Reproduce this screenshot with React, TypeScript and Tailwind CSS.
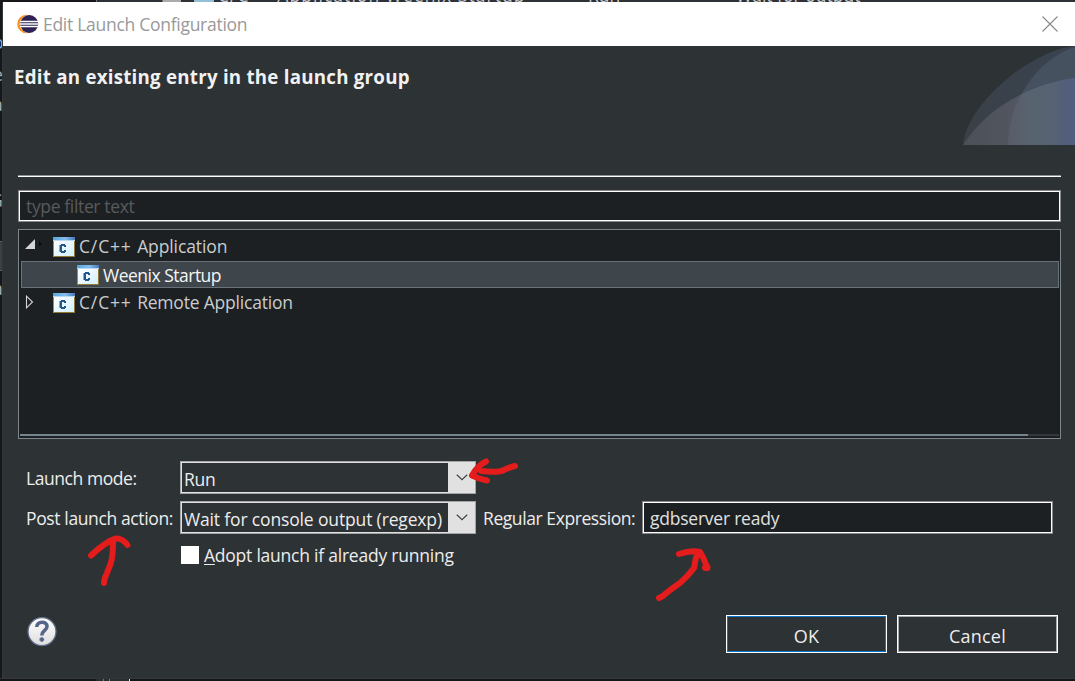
import React from "react";

function EclipseLogo() {
  return (
    <svg width="22" height="20" viewBox="0 0 22 20" className="shrink-0">
      <circle cx="9.4" cy="10" r="9.2" fill="#f7941e" />
      <circle cx="12.2" cy="10" r="9.2" fill="#fbe3c4" />
      <circle cx="12.2" cy="10" r="9" fill="#2c2255" />
      <path d="M3 7.5h18.6M2.7 10h19M3 12.5h18.6" stroke="#fff" strokeWidth="1.3" />
    </svg>
  );
}

function AppIcon() {
  return (
    <svg width="22" height="20" viewBox="0 0 22 20" className="shrink-0" shapeRendering="crispEdges">
      <defs>
        <linearGradient id="bar" x1="0" x2="1">
          <stop offset="0" stopColor="#58a6dc" />
          <stop offset=".55" stopColor="#82bdec" />
          <stop offset="1" stopColor="#4a78b8" />
        </linearGradient>
        <linearGradient id="pane" x1="0" y1="0" x2="1" y2="1">
          <stop offset="0" stopColor="#ffffff" />
          <stop offset="1" stopColor="#d3f0fc" />
        </linearGradient>
      </defs>
      <rect width="22" height="20" fill="#8f7a35" />
      <rect width="1" height="20" fill="#a58c42" />
      <rect x="1" y="4" width="20" height="15" fill="url(#pane)" />
      <rect width="22" height="3" fill="url(#bar)" />
      <rect y="3" width="22" height="1" fill="#b9daf4" />
      <path d="M6 8h2v-1h4v1h1v2h-2v-1h-2v5h2v-1h2v2h-1v1H8v-1H6z" fill="#1f568c" />
      <path d="M6 8h1v7H6z" fill="#7fb0d4" />
    </svg>
  );
}

function Chevron() {
  return (
    <svg width="12" height="7" viewBox="0 0 12 7">
      <path d="M.8.8 6 5.700 11.200.8" fill="none" stroke="#444" strokeWidth="1.200" />
    </svg>
  );
}

function Swoosh() {
  return (
    <svg width="112" height="99" viewBox="963 46 112 99" className="shrink-0">
      <defs>
        <linearGradient id="outer" x1="0" x2="1">
          <stop offset="0" stopColor="#3a4047" />
          <stop offset="1" stopColor="#394351" />
        </linearGradient>
        <linearGradient id="lower" x1="0" x2="1">
          <stop offset="0" stopColor="#4b5157" />
          <stop offset=".4" stopColor="#52555f" />
          <stop offset="1" stopColor="#54607e" />
        </linearGradient>
        <linearGradient id="cross" gradientUnits="userSpaceOnUse" x1="1008" x2="1075" y1="0" y2="0">
          <stop offset="0" stopColor="#595c68" />
          <stop offset=".3" stopColor="#58636f" />
          <stop offset=".7" stopColor="#566273" />
          <stop offset=".85" stopColor="#535e7a" />
          <stop offset="1" stopColor="#535e80" />
        </linearGradient>
        <clipPath id="inner">
          <path d="M1008 145C1008 106 1034 60 1075 47V145Z" />
        </clipPath>
      </defs>
      <path d="M963 145C967 102 1034 49 1075 46V145Z" fill="url(#outer)" />
      <path d="M1008 145C1008 106 1034 60 1075 47V145Z" fill="#465160" />
      <path d="M963 145C988 106 1032 84 1075 78V145Z" fill="url(#lower)" />
      <path d="M963 145C988 106 1032 84 1075 78V145Z" fill="url(#cross)" clipPath="url(#inner)" />
    </svg>
  );
}

function HelpIcon() {
  return (
    <svg width="30" height="30" viewBox="0 0 30 30">
      <defs>
        <linearGradient id="help" x1="0" y1="0" x2="0" y2="1">
          <stop offset="0" stopColor="#fff" />
          <stop offset="1" stopColor="#dedede" />
        </linearGradient>
      </defs>
      <circle cx="15" cy="14.600" r="14" fill="url(#help)" stroke="#5d6e8a" strokeWidth="1.300" />
      <path d="M9.700 10C10 3.800 20 3.800 20 9.500c0 4-5.200 4-5.200 9" fill="none" stroke="#55668a" strokeWidth="3.600" />
      <path d="M14.800 20.200v4.600M12.500 22.500h4.600" stroke="#55668a" strokeWidth="2.400" />
    </svg>
  );
}

function Annotations() {
  return (
    <svg
      width="1075"
      height="681"
      viewBox="0 0 1075 681"
      className="pointer-events-none absolute top-0 left-0"
      fill="none"
      stroke="#e51c1c"
      strokeWidth="6"
      strokeLinecap="round"
      strokeLinejoin="round"
    >
      <path d="M91 555.500C99 548 107 541 116 538.500Q122 538 127.500 545M113 542C113 562 110 565 107 573Q104 579 104 583" />
      <path d="M486 461.500Q477 466 472 475.500Q479 479 487 480.500M481 471Q498 473 504 470Q510 467 515 466" />
      <path d="M679 554Q691 550 700 552Q704 558 707 567M697 554Q695 561 694 568Q688 576 680 583C670 590 667 592 663 596L659 598" />
      <path d="M705.500 567.500h1.500" strokeWidth="7" />
    </svg>
  );
}

function Combo({ value, spacing }: { value: string; spacing: string }) {
  return (
    <div className="flex h-[33px] w-[296px] border border-[#a4a5a6] bg-[#e1e1e1] p-px">
      <div className={`flex h-[29px] w-[266px] items-center bg-[#2d3235] pt-[2px] pl-[2px] whitespace-nowrap ${spacing}`}>
        {value}
      </div>
      <div className="flex flex-1 items-center justify-center pl-px">
        <Chevron />
      </div>
    </div>
  );
}

export default function App() {
  return (
    <div className="relative flex h-[681px] w-[1075px] flex-col overflow-hidden bg-[#17191c] font-['Open_Sans','Noto_Sans',sans-serif] text-[17.5px] leading-[26px] text-[#ededed]">
      <div className="flex h-[2px] shrink-0 items-end overflow-hidden bg-[#2e3136] whitespace-pre text-[#c8cdd2]">
        <div className="h-[2px] w-[96px] bg-[#16181c]" />
        <div className="h-[2px] w-[67px] border-x border-[#6c7074]" />
        <div className="mr-[13px] h-[2px] w-[18px] bg-[#aaa]" />
        <div className="mr-1 h-[2px] w-[20px] bg-[#94bed6]" />
        <span className="-mb-[6px] w-[370px] tracking-[1.05px]">C/C++ Application Weenix Startup</span>
        <span className="-mb-[6px] w-[148px]">Run</span>
        <span className="-mb-[6px]">Wait for output</span>
      </div>

      <div className="flex h-[676px] shrink-0">
        <div className="flex w-[3px] shrink-0 flex-col overflow-hidden border-r border-[#34373a] bg-[#14171b] text-[#a6adb2]">
          <div className="-ml-[7px] pt-[27px] text-[#80b5d8]">o</div>
          <div className="-ml-[7px] pt-[6px]">e</div>
          <div className="-ml-[7px] pt-[4px]">a</div>
          <div className="-ml-[10px] pt-[70px]">G</div>
          <div className="mt-[28px] h-[30px] shrink-0 border-y border-[#596166] bg-[#3a4146]" />
          <div className="-ml-[7px] pt-[4px]">a</div>
        </div>

        <div className="flex flex-1 flex-col bg-[#2d3235]">
          <header className="flex h-[44px] shrink-0 items-center bg-white pl-[14px] text-[#999]">
            <EclipseLogo />
            <span className="ml-[4px] text-[17.5px] tracking-[-0.28px] whitespace-nowrap">Edit Launch Configuration</span>
            <svg width="16" height="16" viewBox="0 0 16 16" className="mr-[17px] ml-auto">
              <path d="M.5.5l15 15M15.500.5l-15 15" stroke="#888" strokeWidth="1.100" />
            </svg>
          </header>

          <section className="flex h-[129px] shrink-0 justify-between">
            <h1 className="pt-[18px] pl-[11px] text-[18.7px] font-bold tracking-[0.25px] whitespace-nowrap text-[#f1f1f1]">
              Edit an existing entry in the launch group
            </h1>
            <Swoosh />
          </section>

          <div className="mr-[14px] ml-[15px] h-[2px] shrink-0 border-t border-[#8b8d8f] bg-white" />

          <div className="mt-[13px] mr-[14px] ml-[15px] h-[32px] shrink-0 border border-[#858788] bg-white p-px">
            <div className="flex h-full items-center bg-[#1c2023] pl-[6px] text-[#595a5b]">
              <span className="tracking-[-0.35px]">type filter text</span>
            </div>
          </div>

          <div className="mt-[7px] mr-[14px] ml-[15px] flex h-[210px] shrink-0 flex-col border border-[#7e868c] bg-[#1c2023] pt-[3px] pr-px pb-[2px] pl-[2px] text-[#c9cccd]">
            <div className="flex h-[28px] shrink-0 items-center">
              <svg width="20" height="12" viewBox="0 0 20 12" className="mr-[8px] ml-[4px] -translate-y-[3px]">
                <path d="M0 11L10 1V11Z" fill="#d3d5d7" />
                <path d="M14 3l3 3-3 2Z" fill="#090b0c" />
              </svg>
              <AppIcon />
              <span className="ml-[4px] pb-[2px] tracking-[-0.1px]">
                <span className="tracking-[0.85px]">C/C++ </span>Application
              </span>
            </div>
            <div className="flex h-[27px] shrink-0 items-center border border-[#687278] bg-[#3f464b] pl-[55px] text-[#f5f5f5]">
              <AppIcon />
              <span className="ml-[4px] tracking-[-0.5px]">Weenix Startup</span>
            </div>
            <div className="flex h-[29px] shrink-0 items-center">
              <svg width="20" height="14" viewBox="0 0 20 14" className="mr-[8px] ml-[4px] -translate-y-px">
                <path d="M1.500 1.200V12.800L7.500 7Z" fill="none" stroke="#d3d5d7" strokeWidth="1.100" />
              </svg>
              <AppIcon />
              <span className="ml-[4px] pb-px tracking-[-0.2px]">
                <span className="tracking-[0.85px]">C/C++ </span>Remote Application
              </span>
            </div>
            <div className="-ml-px mt-auto h-[2px] shrink-0 bg-[#34383c]">
              <div className="h-full w-[1008px] bg-[#75838c]" />
            </div>
          </div>

          <div className="mt-[22px] flex h-[33px] shrink-0 items-center pl-[23px]">
            <label className="w-[154px] tracking-[-0.43px]">Launch mode:</label>
            <Combo value="Run" spacing="tracking-[-0.3px]" />
          </div>

          <div className="mt-[7px] flex h-[33px] shrink-0 items-center pl-[23px] whitespace-nowrap">
            <label className="w-[154px] tracking-[-0.37px]">Post launch action:</label>
            <Combo value="Wait for console output (regexp)" spacing="tracking-[-0.15px]" />
            <label className="w-[166px] pl-[7px] tracking-[-0.42px]">Regular Expression:</label>
            <div className="h-[33px] w-[411px] border border-[#858788] bg-white p-px">
              <div className="flex h-full items-center bg-[#1c2023] pl-[6px] tracking-[-0.23px] text-[#e0e0e0]">gdbserver ready</div>
            </div>
          </div>

          <div className="mt-[8px] flex h-[26px] shrink-0 items-center pl-[178px]">
            <div className="h-[18px] w-[18px] bg-white" />
            <span className="pl-[5px] tracking-[-0.23px] whitespace-nowrap">
              <span className="underline decoration-1 underline-offset-[2px]">A</span>dopt launch if already running
            </span>
          </div>

          <footer className="mt-[47px] flex h-[38px] shrink-0 pr-[17px] pl-[24px]">
            <div className="mr-auto pt-[2px]">
              <HelpIcon />
            </div>
            <button className="mr-[10px] h-[38px] w-[161px] border border-white p-0 text-[18px]">
              <span className="flex h-full items-center justify-center border border-[#0874cc] pt-[3px] tracking-[0.3px]">OK</span>
            </button>
            <button className="h-[38px] w-[161px] border border-white p-0 text-[18px]">
              <span className="flex h-full items-center justify-center border border-[#a8a9aa] pt-[3px] tracking-[0.2px]">Cancel</span>
            </button>
          </footer>
        </div>
      </div>

      <div className="flex h-[3px] shrink-0 border-t border-[#34363a] bg-[#15161c] pl-[96px]">
        <div className="h-full w-[8px] border-r border-[#777] bg-[#292d31]" />
        <div className="h-full w-[6px] border-r border-[#777] bg-[#292d31]" />
        <div className="h-full w-[20px] border-r border-[#ddd] bg-[#292d31]" />
      </div>

      <Annotations />
    </div>
  );
}
